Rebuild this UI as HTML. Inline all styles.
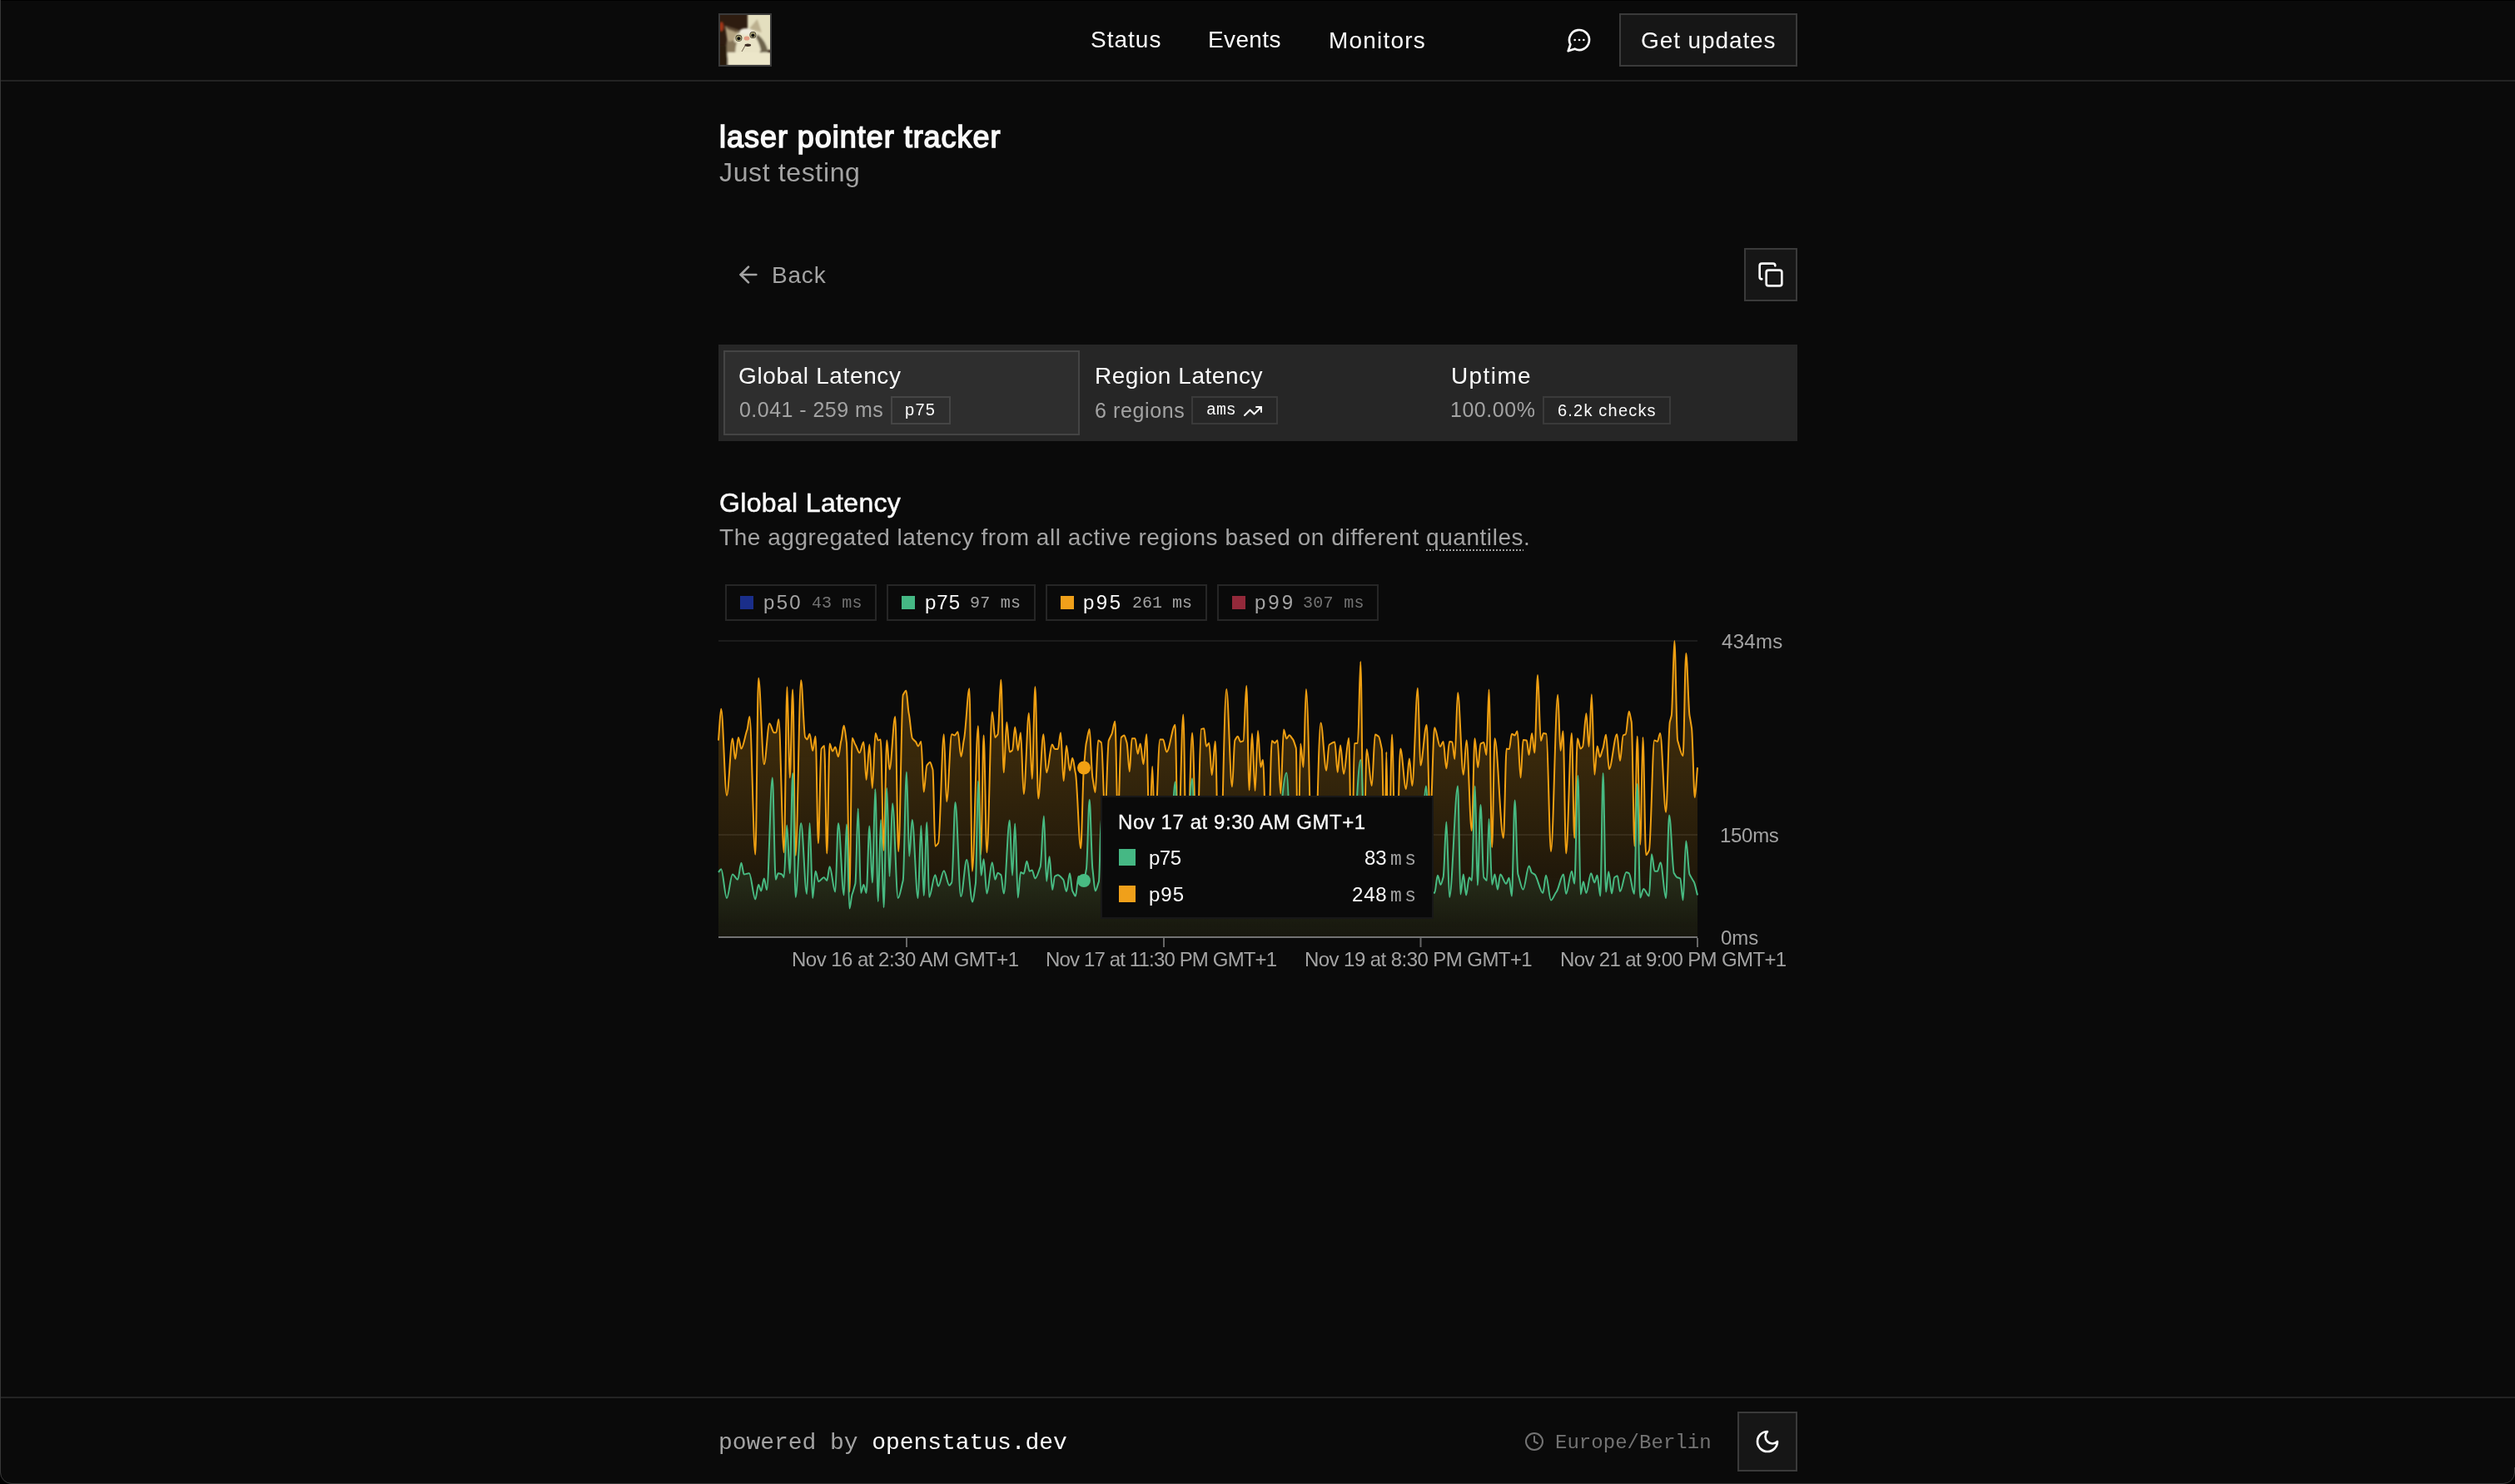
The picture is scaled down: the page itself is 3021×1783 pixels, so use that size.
<!DOCTYPE html>
<html><head><meta charset="utf-8"><title>laser pointer tracker</title>
<style>
html,body{margin:0;padding:0;}
body{width:3021px;height:1783px;background:#0a0a0a;position:relative;overflow:hidden;font-family:'Liberation Sans', sans-serif;}
.t{position:absolute;white-space:nowrap;line-height:1;will-change:transform;}
.r{position:absolute;}
</style></head><body>
<div class="r" style="left:0px;top:96px;width:3021px;height:2px;background:#232323;"></div>
<div class="r" style="left:863px;top:16px;width:64px;height:64px;background:#2a2a2a;border:2px solid #3a3a3a;box-sizing:border-box;overflow:hidden;"></div>
<svg class="r" style="left:865px;top:18px" width="60" height="60" viewBox="0 0 60 60">
<defs><filter id="bl" x="-20%" y="-20%" width="140%" height="140%"><feGaussianBlur stdDeviation="1.1"/></filter>
<filter id="bl2" x="-20%" y="-20%" width="140%" height="140%"><feGaussianBlur stdDeviation="0.5"/></filter></defs>
<rect width="60" height="60" fill="#2e1c10"/>
<g filter="url(#bl)">
<rect x="33" y="-2" width="30" height="44" fill="#e4dfbf"/>
<ellipse cx="1.5" cy="14" rx="3" ry="6" fill="#9e3418"/>
<path d="M6 13 L22 18 L21 30 L9 33 Z" fill="#b3a381"/>
<path d="M6 13 L22 18 L20 21 L9 17 Z" fill="#5e4c34"/>
<path d="M44.6 5 L35 16.5 L50 21 Z" fill="#bcb08f"/>
<ellipse cx="33" cy="36" rx="17" ry="19" fill="#e9e3c6"/>
<ellipse cx="31" cy="20" rx="8" ry="4" fill="#efeadb"/>
<path d="M45 23 Q56 32 58 46 L50 47 Q48 35 43 27 Z" fill="#6d634c"/>
<path d="M8 31 Q6 45 10 56 L19 56 Q17 44 20 33 Z" fill="#87775a"/>
<rect x="9" y="45" width="52" height="16" fill="#ece6c9"/>
<rect x="-2" y="37" width="10" height="25" fill="#2a1a10"/>
</g>
<g filter="url(#bl2)">
<circle cx="22.4" cy="27.8" r="4" fill="#3a3428"/>
<circle cx="22.4" cy="27.9" r="3.2" fill="#a9a274"/>
<circle cx="22.4" cy="28.3" r="2" fill="#0c0c08"/>
<circle cx="39.4" cy="23.9" r="4" fill="#3a3428"/>
<circle cx="39.4" cy="24" r="3.2" fill="#a9a274"/>
<circle cx="39.4" cy="24.4" r="2" fill="#0c0c08"/>
<ellipse cx="32" cy="28" rx="3.4" ry="2.6" fill="#e39c84"/>
<ellipse cx="33.3" cy="36.2" rx="3.8" ry="1.7" fill="#3a2a20"/>
<path d="M30 37 L26 44" stroke="#6a5a48" stroke-width="1"/>
</g>
</svg>
<div class="t" id="t1" style="left:1310.0px;top:33.50px;font-size:28px;color:#fafafa;font-family:'Liberation Sans', sans-serif;letter-spacing:1.0px;">Status</div>
<div class="t" id="t2" style="left:1451.4px;top:33.50px;font-size:28px;color:#fafafa;font-family:'Liberation Sans', sans-serif;letter-spacing:0.36px;">Events</div>
<div class="t" id="t3" style="left:1595.6px;top:34.50px;font-size:28px;color:#fafafa;font-family:'Liberation Sans', sans-serif;letter-spacing:1.2px;">Monitors</div>
<svg class="r" style="left:1881px;top:32px" width="32" height="32" viewBox="0 0 24 24" fill="none" stroke="#fafafa" stroke-width="2" stroke-linecap="round" stroke-linejoin="round"><path d="M7.9 20A9 9 0 1 0 4 16.1L2 22Z"/><path d="M8 12h.01"/><path d="M12 12h.01"/><path d="M16 12h.01"/></svg>
<div class="r" style="left:1945px;top:16px;width:214px;height:64px;background:#161616;border:2px solid #3a3a3a;box-sizing:border-box;"></div>
<div class="t" id="t4" style="left:1971px;top:35.30px;font-size:28px;color:#fafafa;font-family:'Liberation Sans', sans-serif;letter-spacing:0.9px;">Get updates</div>
<div class="t" id="t5" style="left:864px;top:146.53px;font-size:36px;color:#fafafa;font-family:'Liberation Sans', sans-serif;letter-spacing:0.97px;-webkit-text-stroke:1.5px #fafafa;">laser pointer tracker</div>
<div class="t" id="t6" style="left:864px;top:190.91px;font-size:32px;color:#a3a3a3;font-family:'Liberation Sans', sans-serif;letter-spacing:0.636px;">Just testing</div>
<svg class="r" style="left:883px;top:314px" width="32" height="32" viewBox="0 0 24 24" fill="none" stroke="#a3a3a3" stroke-width="2" stroke-linecap="round" stroke-linejoin="round"><path d="m12 19-7-7 7-7"/><path d="M19 12H5"/></svg>
<div class="t" id="t7" style="left:926.6px;top:316.90px;font-size:28px;color:#a3a3a3;font-family:'Liberation Sans', sans-serif;letter-spacing:0.8px;">Back</div>
<div class="r" style="left:2095px;top:298px;width:64px;height:64px;background:#161616;border:2px solid #3a3a3a;box-sizing:border-box;"></div>
<svg class="r" style="left:2111px;top:314px" width="32" height="32" viewBox="0 0 24 24" fill="none" stroke="#fafafa" stroke-width="2" stroke-linecap="round" stroke-linejoin="round"><rect width="14" height="14" x="8" y="8" rx="2" ry="2"/><path d="M4 16c-1.1 0-2-.9-2-2V4c0-1.1.9-2 2-2h10c1.1 0 2 .9 2 2"/></svg>
<div class="r" style="left:863px;top:414px;width:1296px;height:116px;background:#262626;"></div>
<div class="r" style="left:869px;top:421px;width:428px;height:102px;background:#2e2e2e;border:2px solid #444444;box-sizing:border-box;"></div>
<div class="t" id="t8" style="left:887px;top:438.20px;font-size:28px;color:#fafafa;font-family:'Liberation Sans', sans-serif;letter-spacing:0.631px;">Global Latency</div>
<div class="t" id="t9" style="left:887.8px;top:480.14px;font-size:25px;color:#a3a3a3;font-family:'Liberation Sans', sans-serif;letter-spacing:0.461px;">0.041 - 259 ms</div>
<div class="r" style="left:1070px;top:476px;width:72px;height:34px;background:transparent;border:2px solid #454545;box-sizing:border-box;"></div>
<div class="t" id="t10" style="left:1087px;top:482.27px;font-size:20px;color:#fafafa;font-family:'Liberation Sans', sans-serif;letter-spacing:1.3px;">p75</div>
<div class="t" id="t11" style="left:1315.0px;top:438.20px;font-size:28px;color:#fafafa;font-family:'Liberation Sans', sans-serif;letter-spacing:0.539px;">Region Latency</div>
<div class="t" id="t12" style="left:1315px;top:480.84px;font-size:25px;color:#a3a3a3;font-family:'Liberation Sans', sans-serif;letter-spacing:0.625px;">6 regions</div>
<div class="r" style="left:1431px;top:476px;width:104px;height:34px;background:transparent;border:2px solid #3a3a3a;box-sizing:border-box;"></div>
<div class="t" id="t13" style="left:1449.2px;top:482.67px;font-size:20px;color:#fafafa;font-family:'Liberation Mono', monospace;letter-spacing:-0.1px;">ams</div>
<svg class="r" style="left:1493px;top:482px" width="24" height="24" viewBox="0 0 24 24" fill="none" stroke="#fafafa" stroke-width="2" stroke-linecap="round" stroke-linejoin="round"><polyline points="22 7 13.5 15.5 8.5 10.5 2 17"/><polyline points="16 7 22 7 22 13"/></svg>
<div class="t" id="t14" style="left:1743.0px;top:437.80px;font-size:28px;color:#fafafa;font-family:'Liberation Sans', sans-serif;letter-spacing:1.4px;">Uptime</div>
<div class="t" id="t15" style="left:1742px;top:480.34px;font-size:25px;color:#a3a3a3;font-family:'Liberation Sans', sans-serif;letter-spacing:0.533px;">100.00%</div>
<div class="r" style="left:1853px;top:476px;width:154px;height:34px;background:transparent;border:2px solid #3a3a3a;box-sizing:border-box;"></div>
<div class="t" id="t16" style="left:1871.0px;top:483.07px;font-size:20px;color:#fafafa;font-family:'Liberation Sans', sans-serif;letter-spacing:1.2px;">6.2k checks</div>
<div class="t" id="t17" style="left:863.6px;top:587.81px;font-size:32px;color:#fafafa;font-family:'Liberation Sans', sans-serif;letter-spacing:0.338px;-webkit-text-stroke:0.5px #fafafa;">Global Latency</div>
<div class="t" id="t18" style="left:864px;top:631.70px;font-size:28px;color:#a3a3a3;font-family:'Liberation Sans', sans-serif;letter-spacing:0.539px;">The aggregated latency from all active regions based on different <span style="text-decoration:underline dotted;text-decoration-thickness:2px;text-underline-offset:5px;">quantiles</span>.</div>
<div class="r" style="left:871px;top:702px;width:182px;height:44px;background:transparent;border:2px solid #262626;box-sizing:border-box;"></div>
<div class="r" style="left:889px;top:716px;width:16px;height:16px;background:#1a2e8a;"></div>
<div class="t" id="t19" style="left:917px;top:711.88px;font-size:24px;color:#a3a3a3;font-family:'Liberation Sans', sans-serif;letter-spacing:2.3px;">p50</div>
<div class="t" id="t20" style="left:974.6px;top:714.57px;font-size:20px;color:#737373;font-family:'Liberation Mono', monospace;letter-spacing:0.1px;">43 ms</div>
<div class="r" style="left:1065px;top:702px;width:179px;height:44px;background:transparent;border:2px solid #262626;box-sizing:border-box;"></div>
<div class="r" style="left:1083px;top:716px;width:16px;height:16px;background:#45b884;"></div>
<div class="t" id="t21" style="left:1110.6px;top:711.88px;font-size:24px;color:#fafafa;font-family:'Liberation Sans', sans-serif;letter-spacing:1.0px;">p75</div>
<div class="t" id="t22" style="left:1165px;top:714.57px;font-size:20px;color:#a3a3a3;font-family:'Liberation Mono', monospace;letter-spacing:0.25px;">97 ms</div>
<div class="r" style="left:1256px;top:702px;width:194px;height:44px;background:transparent;border:2px solid #262626;box-sizing:border-box;"></div>
<div class="r" style="left:1274px;top:716px;width:16px;height:16px;background:#f0a01a;"></div>
<div class="t" id="t23" style="left:1301px;top:711.88px;font-size:24px;color:#fafafa;font-family:'Liberation Sans', sans-serif;letter-spacing:2.5px;">p95</div>
<div class="t" id="t24" style="left:1360px;top:714.57px;font-size:20px;color:#a3a3a3;font-family:'Liberation Mono', monospace;">261 ms</div>
<div class="r" style="left:1462px;top:702px;width:194px;height:44px;background:transparent;border:2px solid #262626;box-sizing:border-box;"></div>
<div class="r" style="left:1480px;top:716px;width:16px;height:16px;background:#93293a;"></div>
<div class="t" id="t25" style="left:1506.8px;top:711.88px;font-size:24px;color:#a3a3a3;font-family:'Liberation Sans', sans-serif;letter-spacing:3.0px;">p99</div>
<div class="t" id="t26" style="left:1565px;top:714.57px;font-size:20px;color:#737373;font-family:'Liberation Mono', monospace;letter-spacing:0.28px;">307 ms</div>
<svg class="r" style="left:0;top:0" width="3021" height="1200" viewBox="0 0 3021 1200">
<defs>
<linearGradient id="go" gradientUnits="userSpaceOnUse" x1="0" y1="770" x2="0" y2="1126"><stop offset="0" stop-color="#f0a012" stop-opacity="0.30"/><stop offset="1" stop-color="#f0a012" stop-opacity="0.05"/></linearGradient>
<linearGradient id="gg" gradientUnits="userSpaceOnUse" x1="0" y1="913" x2="0" y2="1126"><stop offset="0" stop-color="#48ba82" stop-opacity="0.28"/><stop offset="1" stop-color="#48ba82" stop-opacity="0.03"/></linearGradient>
</defs>
<rect x="863" y="769" width="1176" height="2" fill="#1c1c1c"/>
<rect x="863" y="1002" width="1176" height="2" fill="#1c1c1c"/>
<path d="M863.0,889.6C864.1,877.0 865.2,851.7 866.2,851.7C868.5,851.7 870.7,955.7 873.0,955.7C875.3,955.7 877.6,887.2 879.9,887.2C881.0,887.2 882.1,912.1 883.2,912.1C884.4,912.1 885.7,885.9 886.9,885.9C888.1,885.9 889.2,899.6 890.4,899.6C892.7,899.6 895.1,882.7 897.4,877.2C898.4,874.8 899.4,861.0 900.4,861.0C902.7,861.0 905.0,1026.8 907.3,1026.8C908.6,1026.8 909.8,814.8 911.1,814.8C913.3,814.8 915.6,918.3 917.8,918.3C920.0,918.3 922.1,869.2 924.3,869.2C926.1,869.2 927.9,880.2 929.8,880.2C930.6,880.2 931.4,880.2 932.3,880.2C933.3,880.2 934.3,864.2 935.3,864.2C937.4,864.2 939.6,1024.3 941.7,1024.3C943.0,1024.3 944.2,825.3 945.5,825.3C946.6,825.3 947.6,934.5 948.7,934.5C949.9,934.5 951.0,828.6 952.2,828.6C953.4,828.6 954.5,1028.0 955.7,1028.0C957.8,1028.0 960.0,817.3 962.2,817.3C963.8,817.3 965.5,884.2 967.2,885.9C968.0,886.7 968.8,888.4 969.6,888.4C970.6,888.4 971.6,881.7 972.6,881.7C973.8,881.7 975.0,902.1 976.1,902.1C977.3,902.1 978.4,884.7 979.6,884.7C980.7,884.7 981.8,1013.1 982.9,1013.1C984.1,1013.1 985.3,901.0 986.6,899.6C987.8,898.4 988.9,895.9 990.1,895.9C991.2,895.9 992.2,1025.5 993.3,1025.5C994.4,1025.5 995.5,893.4 996.6,893.4C997.7,893.4 998.9,902.6 1000.0,902.6C1001.1,902.6 1002.2,897.6 1003.3,897.6C1004.5,897.6 1005.7,909.1 1007.0,909.1C1008.1,909.1 1009.3,892.9 1010.5,889.6C1011.5,886.6 1012.6,871.7 1013.7,871.7C1014.8,871.7 1015.9,885.3 1016.9,892.1C1018.1,899.5 1019.3,1071.6 1020.4,1071.6C1021.5,1071.6 1022.6,886.7 1023.7,886.7C1024.9,886.7 1026.2,893.3 1027.4,894.6C1029.1,896.4 1030.7,904.6 1032.4,904.6C1034.1,904.6 1035.7,891.6 1037.4,891.6C1038.5,891.6 1039.5,937.0 1040.6,937.0C1041.9,937.0 1043.1,894.6 1044.4,894.6C1045.5,894.6 1046.7,947.0 1047.8,947.0C1049.1,947.0 1050.3,880.9 1051.6,880.9C1052.7,880.9 1053.7,889.6 1054.8,889.6C1055.8,889.6 1056.8,888.4 1057.8,888.4C1059.1,888.4 1060.3,1021.8 1061.5,1021.8C1062.8,1021.8 1064.0,889.6 1065.3,889.6C1066.4,889.6 1067.4,924.5 1068.5,924.5C1070.8,924.5 1073.0,861.0 1075.3,861.0C1076.6,861.0 1077.9,1023.0 1079.2,1023.0C1081.1,1023.0 1082.9,837.2 1084.7,834.8C1086.0,833.1 1087.2,829.8 1088.5,829.8C1089.5,829.8 1090.6,853.0 1091.7,857.2C1093.1,862.8 1094.5,885.7 1095.9,887.2C1097.2,888.4 1098.4,890.0 1099.7,890.9C1100.8,891.7 1101.8,896.6 1102.9,896.6C1104.1,896.6 1105.2,890.9 1106.4,890.9C1107.5,890.9 1108.6,951.5 1109.6,951.5C1110.9,951.5 1112.1,920.8 1113.4,919.6C1114.6,918.3 1115.9,915.8 1117.1,915.8C1118.2,915.8 1119.3,921.6 1120.4,924.5C1121.4,927.2 1122.4,1016.8 1123.3,1016.8C1124.6,1016.8 1125.8,1014.3 1127.1,1013.1C1129.3,1010.8 1131.6,882.2 1133.8,882.2C1134.9,882.2 1136.0,963.2 1137.1,963.2C1139.1,963.2 1141.2,882.2 1143.2,882.2C1144.5,882.2 1145.7,883.4 1147.0,883.4C1148.1,883.4 1149.3,879.2 1150.5,879.2C1151.8,879.2 1153.1,909.1 1154.5,909.1C1155.6,909.1 1156.8,892.6 1157.9,888.4C1160.1,880.7 1162.3,827.3 1164.4,827.3C1165.6,827.3 1166.7,1046.7 1167.9,1046.7C1170.2,1046.7 1172.6,872.2 1174.9,872.2C1176.0,872.2 1177.0,1026.8 1178.1,1026.8C1179.3,1026.8 1180.5,883.4 1181.6,883.4C1182.9,883.4 1184.1,1024.3 1185.4,1024.3C1187.5,1024.3 1189.7,855.5 1191.8,855.5C1193.0,855.5 1194.2,885.9 1195.3,885.9C1196.4,885.9 1197.5,883.4 1198.6,882.2C1199.8,880.7 1201.1,816.8 1202.3,816.8C1203.5,816.8 1204.6,928.3 1205.8,928.3C1206.9,928.3 1208.1,867.7 1209.3,867.7C1210.4,867.7 1211.6,903.4 1212.8,903.4C1213.8,903.4 1214.9,902.2 1216.0,901.6C1217.1,901.0 1218.2,873.4 1219.2,873.4C1220.4,873.4 1221.6,901.6 1222.7,901.6C1223.8,901.6 1224.9,880.2 1226.0,880.2C1227.2,880.2 1228.5,954.0 1229.7,954.0C1231.8,954.0 1233.9,856.7 1235.9,856.7C1237.2,856.7 1238.4,935.8 1239.7,935.8C1240.9,935.8 1242.2,825.3 1243.4,825.3C1244.7,825.3 1245.9,959.5 1247.2,959.5C1249.2,959.5 1251.3,882.2 1253.4,882.2C1254.6,882.2 1255.9,928.3 1257.1,928.3C1259.4,928.3 1261.6,894.6 1263.8,894.6C1264.9,894.6 1266.0,900.1 1267.1,900.1C1268.3,900.1 1269.6,900.1 1270.8,900.1C1271.9,900.1 1273.0,880.2 1274.1,880.2C1275.2,880.2 1276.4,938.3 1277.6,938.3C1278.7,938.3 1279.9,895.9 1281.0,895.9C1282.4,895.9 1283.7,925.8 1285.0,925.8C1286.1,925.8 1287.1,910.8 1288.2,910.8C1289.5,910.8 1290.7,924.2 1292.0,929.5C1294.0,938.4 1296.1,1019.3 1298.2,1019.3C1299.4,1019.3 1300.7,932.7 1301.9,922.1C1302.9,913.5 1303.9,895.9 1304.9,892.1C1306.2,887.5 1307.4,875.9 1308.7,875.9C1309.9,875.9 1311.1,928.2 1312.4,934.5C1313.5,940.0 1314.6,952.0 1315.6,952.0C1316.8,952.0 1318.0,889.6 1319.1,889.6C1320.4,889.6 1321.6,891.3 1322.9,892.1C1324.4,893.1 1325.9,979.4 1327.3,979.4C1328.8,979.4 1330.3,892.8 1331.8,889.6C1333.0,887.2 1334.2,883.9 1335.3,882.2C1336.6,880.2 1338.0,866.7 1339.3,866.7C1340.5,866.7 1341.6,984.4 1342.8,984.4C1344.1,984.4 1345.5,886.9 1346.8,885.9C1347.9,885.1 1349.1,883.4 1350.3,883.4C1351.4,883.4 1352.4,889.2 1353.5,892.1C1354.6,895.0 1355.7,927.0 1356.8,927.0C1357.7,927.0 1358.7,887.2 1359.7,887.2C1361.0,887.2 1362.2,887.2 1363.5,887.2C1364.6,887.2 1365.6,905.8 1366.7,905.8C1367.7,905.8 1368.7,893.4 1369.7,893.4C1371.0,893.4 1372.2,918.3 1373.4,918.3C1374.7,918.3 1375.9,882.2 1377.2,882.2C1378.3,882.2 1379.5,1009.3 1380.7,1009.3C1381.8,1009.3 1383.0,920.8 1384.2,920.8C1385.2,920.8 1386.2,1004.3 1387.2,1004.3C1389.2,1004.3 1391.3,888.4 1393.4,888.4C1394.6,888.4 1395.9,888.4 1397.1,888.4C1398.5,888.4 1399.9,903.4 1401.4,903.4C1404.8,903.4 1408.2,870.9 1411.6,870.9C1412.7,870.9 1413.9,1021.8 1415.1,1021.8C1417.2,1021.8 1419.3,858.4 1421.3,858.4C1422.7,858.4 1424.0,1056.5 1425.4,1056.5C1427.6,1056.5 1429.9,880.6 1432.1,880.6C1433.9,880.6 1435.7,1029.5 1437.5,1029.5C1439.3,1029.5 1441.1,876.3 1442.9,875.9C1444.0,875.7 1445.2,875.2 1446.3,875.2C1447.2,875.2 1448.1,896.8 1449.0,896.8C1450.1,896.8 1451.2,892.7 1452.3,892.7C1453.5,892.7 1454.6,931.2 1455.7,931.2C1457.1,931.2 1458.4,890.7 1459.8,890.7C1461.3,890.7 1462.9,1083.5 1464.5,1083.5C1467.4,1083.5 1470.3,828.1 1473.2,828.1C1475.5,828.1 1477.7,945.3 1480.0,945.3C1481.1,945.3 1482.2,891.0 1483.4,889.4C1484.5,887.8 1485.6,884.7 1486.7,884.7C1487.8,884.7 1489.0,891.4 1490.1,891.4C1491.2,891.4 1492.3,890.5 1493.5,890.1C1494.7,889.6 1496.0,824.0 1497.2,824.0C1498.4,824.0 1499.5,949.4 1500.6,949.4C1501.7,949.4 1502.9,881.3 1504.0,881.3C1505.2,881.3 1506.4,950.0 1507.6,950.0C1508.7,950.0 1509.9,877.9 1511.0,877.9C1512.1,877.9 1513.2,921.7 1514.4,921.7C1515.3,921.7 1516.1,913.0 1517.0,913.0C1518.8,913.0 1520.6,1070.0 1522.4,1070.0C1524.2,1070.0 1526.0,890.1 1527.8,890.1C1529.0,890.1 1530.1,892.7 1531.2,892.7C1532.3,892.7 1533.4,889.4 1534.6,889.4C1535.8,889.4 1537.1,953.4 1538.3,953.4C1539.6,953.4 1540.8,876.6 1542.0,876.6C1543.1,876.6 1544.2,887.4 1545.4,887.4C1546.5,887.4 1547.6,883.3 1548.7,883.3C1550.1,883.3 1551.4,886.7 1552.8,888.0C1554.1,889.3 1555.5,895.2 1556.8,898.8C1557.6,900.9 1558.3,1043.0 1559.1,1043.0C1560.1,1043.0 1561.2,893.4 1562.2,893.4C1563.3,893.4 1564.4,921.7 1565.6,921.7C1566.7,921.7 1567.8,828.1 1568.9,828.1C1571.9,828.1 1574.8,1096.9 1577.7,1096.9C1580.6,1096.9 1583.5,868.5 1586.5,868.5C1588.7,868.5 1591.0,925.8 1593.2,925.8C1594.3,925.8 1595.5,895.3 1596.6,894.8C1598.8,893.6 1601.1,891.4 1603.3,891.4C1604.4,891.4 1605.6,927.8 1606.7,927.8C1607.8,927.8 1608.9,895.4 1610.1,895.4C1611.4,895.4 1612.7,929.8 1614.1,929.8C1616.1,929.8 1618.1,886.7 1620.2,886.7C1621.4,886.7 1622.6,1056.5 1623.8,1056.5C1624.8,1056.5 1625.9,893.6 1626.9,893.4C1628.2,893.2 1629.6,893.0 1630.9,892.7C1632.1,892.6 1633.2,795.0 1634.3,795.0C1635.6,795.0 1636.8,1029.5 1638.1,1029.5C1639.3,1029.5 1640.5,900.2 1641.7,900.2C1643.7,900.2 1645.8,944.0 1647.8,944.0C1649.1,944.0 1650.5,882.6 1651.8,882.6C1653.2,882.6 1654.5,884.0 1655.9,884.7C1657.2,885.3 1658.6,895.0 1659.9,900.2C1661.0,904.5 1662.2,1043.0 1663.3,1043.0C1664.0,1043.0 1664.6,903.5 1665.3,903.5C1666.2,903.5 1667.1,1056.5 1668.0,1056.5C1669.4,1056.5 1670.7,882.6 1672.1,882.6C1673.6,882.6 1675.2,1070.0 1676.8,1070.0C1678.6,1070.0 1680.4,899.5 1682.2,899.5C1684.4,899.5 1686.7,948.0 1688.9,948.0C1690.3,948.0 1691.6,911.6 1692.9,911.6C1694.1,911.6 1695.2,944.0 1696.3,944.0C1698.5,944.0 1700.8,826.8 1703.0,826.8C1704.1,826.8 1705.2,919.6 1706.2,919.6C1708.7,919.6 1711.2,870.9 1713.7,870.9C1715.1,870.9 1716.5,984.4 1717.9,984.4C1719.7,984.4 1721.4,874.2 1723.2,874.2C1725.4,874.2 1727.7,897.1 1729.9,897.1C1731.2,897.1 1732.4,890.9 1733.6,890.9C1734.9,890.9 1736.1,923.3 1737.4,923.3C1738.6,923.3 1739.9,890.9 1741.1,890.9C1742.2,890.9 1743.3,891.4 1744.4,891.6C1745.4,891.9 1746.4,912.1 1747.4,912.1C1748.6,912.1 1749.9,832.3 1751.1,832.3C1753.3,832.3 1755.6,930.8 1757.8,930.8C1759.1,930.8 1760.3,889.6 1761.6,889.6C1763.6,889.6 1765.7,998.1 1767.8,998.1C1769.0,998.1 1770.3,887.2 1771.5,887.2C1772.8,887.2 1774.0,922.1 1775.3,922.1C1776.4,922.1 1777.4,893.7 1778.5,893.4C1779.8,893.0 1781.0,892.1 1782.3,892.1C1783.3,892.1 1784.4,907.1 1785.5,907.1C1786.5,907.1 1787.5,828.6 1788.5,828.6C1789.7,828.6 1791.0,1018.0 1792.2,1018.0C1793.3,1018.0 1794.4,887.2 1795.5,887.2C1799.0,887.2 1802.4,1006.8 1805.9,1006.8C1807.2,1006.8 1808.4,899.6 1809.7,899.6C1810.8,899.6 1811.8,900.1 1812.9,900.1C1813.9,900.1 1814.9,881.7 1815.9,881.7C1817.1,881.7 1818.4,883.4 1819.6,883.4C1820.6,883.4 1821.6,878.4 1822.6,878.4C1824.0,878.4 1825.3,934.5 1826.6,934.5C1827.6,934.5 1828.6,889.1 1829.6,889.1C1831.0,889.1 1832.4,889.5 1833.8,889.6C1834.8,889.8 1835.7,907.1 1836.6,907.1C1837.8,907.1 1838.9,880.9 1840.1,880.9C1841.2,880.9 1842.2,904.6 1843.3,904.6C1844.6,904.6 1845.8,811.1 1847.1,811.1C1848.3,811.1 1849.6,890.1 1850.8,890.1C1851.9,890.1 1853.0,880.9 1854.0,880.9C1855.2,880.9 1856.4,881.4 1857.5,881.7C1859.3,882.1 1861.2,1023.0 1863.0,1023.0C1865.7,1023.0 1868.5,834.8 1871.2,834.8C1872.3,834.8 1873.4,902.1 1874.5,902.1C1875.5,902.1 1876.5,878.4 1877.5,878.4C1878.7,878.4 1879.9,1025.5 1881.2,1025.5C1883.4,1025.5 1885.7,880.9 1887.9,880.9C1889.0,880.9 1890.1,1006.8 1891.2,1006.8C1892.4,1006.8 1893.7,887.2 1894.9,887.2C1896.2,887.2 1897.4,899.6 1898.6,899.6C1899.5,899.6 1900.3,898.0 1901.1,897.1C1902.5,895.7 1904.0,857.2 1905.4,857.2C1906.5,857.2 1907.5,897.1 1908.6,897.1C1909.7,897.1 1910.8,834.3 1911.9,834.3C1913.0,834.3 1914.2,930.8 1915.3,930.8C1916.4,930.8 1917.5,896.6 1918.6,896.6C1919.7,896.6 1920.7,909.6 1921.8,909.6C1923.0,909.6 1924.2,901.7 1925.3,899.6C1926.6,897.3 1927.8,882.7 1929.1,882.7C1930.3,882.7 1931.6,924.0 1932.8,924.0C1936.0,924.0 1939.1,882.2 1942.3,882.2C1943.5,882.2 1944.8,914.1 1946.0,914.1C1947.3,914.1 1948.5,883.9 1949.8,883.4C1950.8,883.0 1951.7,882.6 1952.7,882.2C1954.1,881.6 1955.4,854.7 1956.7,854.7C1957.7,854.7 1958.7,863.0 1959.7,867.2C1961.0,872.4 1962.2,1016.8 1963.5,1016.8C1964.5,1016.8 1965.6,884.7 1966.7,884.7C1967.9,884.7 1969.0,1014.8 1970.2,1014.8C1971.3,1014.8 1972.4,885.9 1973.4,885.9C1974.7,885.9 1975.9,1027.3 1977.2,1027.3C1978.4,1027.3 1979.7,1023.6 1980.9,1021.8C1983.0,1018.7 1985.1,889.6 1987.2,889.6C1988.4,889.6 1989.6,890.9 1990.9,890.9C1992.0,890.9 1993.1,880.9 1994.1,880.9C1996.5,880.9 1998.8,975.7 2001.1,975.7C2002.7,975.7 2004.3,873.1 2005.8,867.2C2006.5,864.7 2007.2,862.2 2007.8,859.7C2009.0,855.4 2010.2,770.0 2011.3,770.0C2012.6,770.0 2013.8,886.0 2015.1,889.6C2017.2,895.9 2019.4,908.3 2021.6,908.3C2022.8,908.3 2024.0,784.9 2025.3,784.9C2026.7,784.9 2028.1,852.4 2029.5,859.7C2030.4,864.0 2031.2,869.7 2032.0,874.7C2033.3,882.2 2034.5,958.2 2035.8,958.2C2036.8,958.2 2037.9,934.1 2039.0,922.1L2039,1126L863,1126Z" fill="url(#go)"/>
<path d="M863.0,1048.0C864.1,1046.7 865.2,1044.2 866.2,1044.2C868.5,1044.2 870.7,1079.1 873.0,1079.1C875.3,1079.1 877.6,1050.5 879.9,1050.5C882.0,1050.5 884.1,1056.7 886.2,1056.7C887.6,1056.7 889.0,1036.7 890.4,1036.7C891.5,1036.7 892.6,1050.5 893.6,1050.5C895.7,1050.5 897.8,1049.2 899.9,1049.2C902.4,1049.2 904.9,1080.4 907.3,1080.4C908.6,1080.4 909.8,1062.9 911.1,1062.9C912.2,1062.9 913.2,1070.4 914.3,1070.4C915.5,1070.4 916.6,1055.4 917.8,1055.4C918.9,1055.4 920.0,1069.1 921.1,1069.1C923.3,1069.1 925.5,934.5 927.8,934.5C929.1,934.5 930.4,1056.7 931.8,1056.7C932.8,1056.7 933.8,1049.2 934.8,1049.2C936.3,1049.2 937.7,1050.0 939.2,1050.5C940.1,1050.7 940.9,1054.2 941.7,1054.2C942.9,1054.2 944.1,991.4 945.2,991.4C946.4,991.4 947.5,1049.2 948.7,1049.2C949.9,1049.2 951.0,929.0 952.2,929.0C953.4,929.0 954.5,1077.9 955.7,1077.9C957.8,1077.9 960.0,988.9 962.2,988.9C964.5,988.9 966.8,1074.1 969.1,1074.1C970.3,1074.1 971.5,988.9 972.6,988.9C973.8,988.9 975.0,1079.1 976.1,1079.1C977.3,1079.1 978.4,1046.7 979.6,1046.7C980.9,1046.7 982.1,1059.2 983.3,1059.2C985.4,1059.2 987.5,1054.2 989.6,1054.2C990.8,1054.2 992.1,1057.9 993.3,1057.9C994.4,1057.9 995.5,1041.2 996.6,1041.2C998.8,1041.2 1001.0,1071.6 1003.3,1071.6C1004.5,1071.6 1005.7,988.9 1007.0,988.9C1009.2,988.9 1011.5,1075.4 1013.7,1075.4C1014.8,1075.4 1015.9,990.6 1016.9,990.6C1018.1,990.6 1019.3,1091.6 1020.4,1091.6C1021.5,1091.6 1022.6,1076.5 1023.7,1074.1C1024.9,1071.4 1026.2,1065.8 1027.4,1061.7C1028.5,1058.1 1029.6,971.4 1030.7,971.4C1031.8,971.4 1033.0,1072.9 1034.1,1072.9C1035.2,1072.9 1036.3,1062.9 1037.4,1062.9C1038.5,1062.9 1039.5,1072.9 1040.6,1072.9C1041.9,1072.9 1043.1,992.4 1044.4,992.4C1045.5,992.4 1046.7,1060.4 1047.8,1060.4C1049.0,1060.4 1050.2,948.2 1051.3,948.2C1052.5,948.2 1053.7,1082.9 1054.8,1082.9C1055.9,1082.9 1057.0,985.1 1058.1,985.1C1059.2,985.1 1060.4,1090.3 1061.5,1090.3C1062.8,1090.3 1064.0,947.0 1065.3,947.0C1066.4,947.0 1067.4,1052.9 1068.5,1052.9C1069.7,1052.9 1070.9,965.2 1072.0,965.2C1074.3,965.2 1076.5,1079.1 1078.7,1079.1C1080.7,1079.1 1082.7,1065.0 1084.7,1057.9C1086.1,1052.9 1087.5,927.5 1089.0,927.5C1090.0,927.5 1091.1,1028.8 1092.2,1028.8C1093.4,1028.8 1094.5,985.1 1095.7,985.1C1098.0,985.1 1100.3,1079.1 1102.7,1079.1C1103.9,1079.1 1105.2,991.9 1106.4,991.9C1107.5,991.9 1108.6,1076.1 1109.6,1076.1C1110.9,1076.1 1112.1,988.1 1113.4,988.1C1114.3,988.1 1115.2,1077.9 1116.1,1077.9C1118.5,1077.9 1120.9,1051.2 1123.3,1051.2C1124.6,1051.2 1125.8,1064.7 1127.1,1064.7C1129.3,1064.7 1131.6,1046.2 1133.8,1046.2C1136.0,1046.2 1138.1,1063.7 1140.3,1063.7C1141.3,1063.7 1142.3,1061.5 1143.2,1060.4C1144.7,1058.9 1146.1,963.9 1147.5,963.9C1149.7,963.9 1152.0,1077.1 1154.2,1077.1C1156.5,1077.1 1158.9,1033.0 1161.2,1033.0C1163.5,1033.0 1165.8,1083.6 1168.2,1083.6C1169.4,1083.6 1170.7,1069.0 1171.9,1061.7C1172.9,1055.8 1173.9,938.3 1174.9,938.3C1176.1,938.3 1177.4,1051.7 1178.6,1051.7C1179.6,1051.7 1180.6,1032.3 1181.6,1032.3C1182.9,1032.3 1184.1,1073.6 1185.4,1073.6C1187.5,1073.6 1189.7,1036.2 1191.8,1036.2C1193.0,1036.2 1194.2,1056.7 1195.3,1056.7C1196.4,1056.7 1197.5,1048.7 1198.6,1048.7C1199.8,1048.7 1201.1,1050.4 1202.3,1051.2C1203.5,1052.0 1204.6,1073.6 1205.8,1073.6C1208.1,1073.6 1210.4,985.6 1212.8,985.6C1213.8,985.6 1214.9,1051.7 1216.0,1051.7C1217.1,1051.7 1218.2,989.4 1219.2,989.4C1220.4,989.4 1221.6,1078.6 1222.7,1078.6C1223.8,1078.6 1224.9,1048.0 1226.0,1048.0C1227.2,1048.0 1228.5,1049.7 1229.7,1049.7C1231.0,1049.7 1232.2,1034.7 1233.4,1034.7C1234.5,1034.7 1235.6,1046.7 1236.7,1046.7C1237.7,1046.7 1238.7,1045.5 1239.7,1045.5C1240.9,1045.5 1242.2,1055.4 1243.4,1055.4C1245.5,1055.4 1247.6,1046.3 1249.6,1041.7C1251.1,1038.6 1252.5,980.6 1253.9,980.6C1255.0,980.6 1256.0,1058.7 1257.1,1058.7C1258.3,1058.7 1259.4,1029.3 1260.6,1029.3C1261.8,1029.3 1262.9,1069.1 1264.1,1069.1C1265.1,1069.1 1266.1,1053.4 1267.1,1052.9C1268.3,1052.4 1269.6,1051.2 1270.8,1051.2C1272.9,1051.2 1275.0,1054.9 1277.1,1056.7C1278.4,1057.9 1279.7,1071.1 1281.0,1071.1C1282.4,1071.1 1283.7,1049.2 1285.0,1049.2C1286.1,1049.2 1287.1,1068.6 1288.2,1070.4C1289.5,1072.5 1290.7,1076.6 1292.0,1076.6C1293.1,1076.6 1294.3,1052.9 1295.4,1052.9C1297.6,1052.9 1299.8,1057.9 1301.9,1057.9C1302.9,1057.9 1303.9,1048.8 1304.9,1044.2C1306.2,1038.5 1307.4,960.7 1308.7,960.7C1309.9,960.7 1311.1,1035.1 1312.4,1044.2C1313.5,1052.2 1314.6,1070.4 1315.6,1070.4C1317.0,1070.4 1318.5,1062.9 1319.9,1059.2C1320.9,1056.5 1321.9,981.9 1322.9,981.9C1324.4,981.9 1325.9,1071.6 1327.3,1071.6C1329.8,1071.6 1332.3,1059.2 1334.8,1059.2C1338.1,1059.2 1341.5,1066.7 1344.8,1066.7C1348.1,1066.7 1351.4,1056.7 1354.8,1056.7C1358.1,1056.7 1361.4,1069.1 1364.7,1069.1C1368.0,1069.1 1371.4,1061.7 1374.7,1061.7C1378.0,1061.7 1381.3,1071.6 1384.7,1071.6C1388.0,1071.6 1391.3,1067.7 1394.6,1066.7C1397.9,1065.6 1401.3,1061.7 1404.6,1059.2C1406.9,1057.4 1409.2,939.5 1411.6,939.5C1413.0,939.5 1414.4,1060.2 1415.8,1064.2C1418.1,1070.6 1420.4,1083.5 1422.7,1083.5C1425.8,1083.5 1429.0,935.2 1432.1,935.2C1433.9,935.2 1435.7,1096.9 1437.5,1096.9C1440.7,1096.9 1443.8,1070.0 1447.0,1070.0C1451.5,1070.0 1455.9,1090.2 1460.4,1090.2C1464.9,1090.2 1469.4,1076.7 1473.9,1076.7C1478.4,1076.7 1482.9,1090.2 1487.4,1090.2C1491.9,1090.2 1496.4,1070.0 1500.9,1070.0C1505.4,1070.0 1509.9,1096.9 1514.4,1096.9C1518.8,1096.9 1523.3,1086.1 1527.8,1080.8C1533.7,1073.7 1539.5,928.5 1545.4,928.5C1548.0,928.5 1550.7,1090.2 1553.4,1090.2C1558.4,1090.2 1563.3,1076.7 1568.3,1076.7C1572.8,1076.7 1577.3,1090.2 1581.7,1090.2C1586.2,1090.2 1590.7,1070.0 1595.2,1070.0C1599.7,1070.0 1604.2,1094.2 1608.7,1094.2C1613.2,1094.2 1617.7,1082.6 1622.2,1076.7C1626.2,1071.5 1630.3,913.0 1634.3,913.0C1637.0,913.0 1639.7,1090.2 1642.4,1090.2C1646.9,1090.2 1651.4,1076.7 1655.9,1076.7C1660.4,1076.7 1664.9,1090.2 1669.4,1090.2C1673.9,1090.2 1678.3,1070.0 1682.8,1070.0C1687.3,1070.0 1691.8,1094.2 1696.3,1094.2C1699.2,1094.2 1702.1,1075.8 1705.0,1066.7C1707.6,1058.2 1710.3,944.5 1713.0,944.5C1714.9,944.5 1716.8,1067.6 1718.7,1069.1C1720.2,1070.4 1721.7,1072.9 1723.2,1072.9C1724.4,1072.9 1725.7,1051.7 1726.9,1051.7C1728.1,1051.7 1729.2,1062.9 1730.4,1062.9C1731.5,1062.9 1732.6,1057.1 1733.6,1054.2C1734.9,1050.8 1736.1,987.4 1737.4,987.4C1738.6,987.4 1739.9,1077.9 1741.1,1077.9C1744.4,1077.9 1747.8,944.5 1751.1,944.5C1752.2,944.5 1753.3,1074.6 1754.3,1074.6C1755.5,1074.6 1756.7,1050.5 1757.8,1050.5C1758.9,1050.5 1760.0,1075.4 1761.1,1075.4C1762.3,1075.4 1763.6,1054.2 1764.8,1054.2C1765.8,1054.2 1766.8,1057.9 1767.8,1057.9C1769.1,1057.9 1770.5,944.5 1771.8,944.5C1772.8,944.5 1773.8,1063.7 1774.8,1063.7C1776.0,1063.7 1777.3,966.9 1778.5,966.9C1779.8,966.9 1781.0,1052.9 1782.3,1054.2C1783.5,1055.4 1784.7,1057.9 1786.0,1057.9C1786.8,1057.9 1787.7,983.9 1788.5,983.9C1789.7,983.9 1791.0,1062.9 1792.2,1062.9C1793.3,1062.9 1794.4,1050.5 1795.5,1050.5C1796.6,1050.5 1797.8,1068.7 1799.0,1068.7C1800.0,1068.7 1801.1,1050.5 1802.2,1050.5C1804.5,1050.5 1806.8,1061.7 1809.2,1061.7C1810.3,1061.7 1811.5,1054.7 1812.7,1054.7C1813.7,1054.7 1814.8,1076.6 1815.9,1076.6C1817.1,1076.6 1818.4,961.4 1819.6,961.4C1820.9,961.4 1822.1,1046.8 1823.4,1050.5C1825.5,1056.5 1827.5,1068.7 1829.6,1068.7C1831.9,1068.7 1834.3,1040.5 1836.6,1040.5C1837.8,1040.5 1838.9,1048.1 1840.1,1048.7C1841.2,1049.3 1842.2,1049.9 1843.3,1050.5C1846.6,1052.0 1850.0,1072.9 1853.3,1072.9C1854.5,1072.9 1855.8,1051.7 1857.0,1051.7C1859.0,1051.7 1861.0,1081.6 1863.0,1081.6C1865.2,1081.6 1867.3,1073.8 1869.5,1071.6C1872.3,1068.9 1875.1,1050.5 1878.0,1050.5C1879.0,1050.5 1880.1,1074.1 1881.2,1074.1C1883.4,1074.1 1885.7,1046.7 1887.9,1046.7C1889.0,1046.7 1890.1,1061.7 1891.2,1061.7C1892.6,1061.7 1894.0,932.0 1895.4,932.0C1896.5,932.0 1897.6,1074.6 1898.6,1074.6C1899.7,1074.6 1900.8,1059.2 1901.9,1059.2C1903.0,1059.2 1904.2,1072.9 1905.4,1072.9C1907.3,1072.9 1909.2,1049.2 1911.1,1049.2C1912.5,1049.2 1913.9,1060.4 1915.3,1060.4C1916.4,1060.4 1917.5,1051.7 1918.6,1051.7C1919.8,1051.7 1921.1,1076.6 1922.3,1076.6C1923.4,1076.6 1924.5,929.0 1925.6,929.0C1926.7,929.0 1927.9,1071.6 1929.1,1071.6C1930.1,1071.6 1931.2,1047.2 1932.3,1047.2C1933.5,1047.2 1934.8,1073.6 1936.0,1073.6C1937.1,1073.6 1938.2,1054.8 1939.3,1054.2C1940.4,1053.5 1941.6,1052.2 1942.8,1052.2C1943.9,1052.2 1944.9,1071.1 1946.0,1071.1C1948.5,1071.1 1951.0,1048.0 1953.5,1048.0C1954.6,1048.0 1955.7,1048.8 1956.7,1049.2C1958.8,1050.0 1960.9,1074.1 1963.0,1074.1C1964.2,1074.1 1965.5,942.0 1966.7,942.0C1967.9,942.0 1969.0,1078.6 1970.2,1078.6C1971.5,1078.6 1972.9,1067.9 1974.2,1067.9C1976.4,1067.9 1978.7,1076.6 1980.9,1076.6C1981.9,1076.6 1982.9,1026.3 1983.9,1026.3C1985.2,1026.3 1986.4,1046.7 1987.6,1046.7C1988.7,1046.7 1989.8,1046.7 1990.9,1046.7C1992.1,1046.7 1993.4,1036.2 1994.6,1036.2C1996.8,1036.2 1999.0,1079.1 2001.1,1079.1C2002.4,1079.1 2003.8,979.4 2005.1,979.4C2007.0,979.4 2008.9,1046.7 2010.8,1049.2C2012.1,1050.9 2013.3,1053.8 2014.6,1054.2C2015.8,1054.6 2017.1,1055.0 2018.3,1055.4C2019.4,1055.8 2020.5,1081.6 2021.6,1081.6C2022.8,1081.6 2024.0,1010.6 2025.3,1010.6C2026.7,1010.6 2028.1,1048.0 2029.5,1050.5C2031.2,1053.4 2032.9,1056.9 2034.5,1059.2C2036.0,1061.2 2037.5,1070.0 2039.0,1075.4L2039,1126L863,1126Z" fill="url(#gg)"/>
<path d="M863.0,889.6C864.1,877.0 865.2,851.7 866.2,851.7C868.5,851.7 870.7,955.7 873.0,955.7C875.3,955.7 877.6,887.2 879.9,887.2C881.0,887.2 882.1,912.1 883.2,912.1C884.4,912.1 885.7,885.9 886.9,885.9C888.1,885.9 889.2,899.6 890.4,899.6C892.7,899.6 895.1,882.7 897.4,877.2C898.4,874.8 899.4,861.0 900.4,861.0C902.7,861.0 905.0,1026.8 907.3,1026.8C908.6,1026.8 909.8,814.8 911.1,814.8C913.3,814.8 915.6,918.3 917.8,918.3C920.0,918.3 922.1,869.2 924.3,869.2C926.1,869.2 927.9,880.2 929.8,880.2C930.6,880.2 931.4,880.2 932.3,880.2C933.3,880.2 934.3,864.2 935.3,864.2C937.4,864.2 939.6,1024.3 941.7,1024.3C943.0,1024.3 944.2,825.3 945.5,825.3C946.6,825.3 947.6,934.5 948.7,934.5C949.9,934.5 951.0,828.6 952.2,828.6C953.4,828.6 954.5,1028.0 955.7,1028.0C957.8,1028.0 960.0,817.3 962.2,817.3C963.8,817.3 965.5,884.2 967.2,885.9C968.0,886.7 968.8,888.4 969.6,888.4C970.6,888.4 971.6,881.7 972.6,881.7C973.8,881.7 975.0,902.1 976.1,902.1C977.3,902.1 978.4,884.7 979.6,884.7C980.7,884.7 981.8,1013.1 982.9,1013.1C984.1,1013.1 985.3,901.0 986.6,899.6C987.8,898.4 988.9,895.9 990.1,895.9C991.2,895.9 992.2,1025.5 993.3,1025.5C994.4,1025.5 995.5,893.4 996.6,893.4C997.7,893.4 998.9,902.6 1000.0,902.6C1001.1,902.6 1002.2,897.6 1003.3,897.6C1004.5,897.6 1005.7,909.1 1007.0,909.1C1008.1,909.1 1009.3,892.9 1010.5,889.6C1011.5,886.6 1012.6,871.7 1013.7,871.7C1014.8,871.7 1015.9,885.3 1016.9,892.1C1018.1,899.5 1019.3,1071.6 1020.4,1071.6C1021.5,1071.6 1022.6,886.7 1023.7,886.7C1024.9,886.7 1026.2,893.3 1027.4,894.6C1029.1,896.4 1030.7,904.6 1032.4,904.6C1034.1,904.6 1035.7,891.6 1037.4,891.6C1038.5,891.6 1039.5,937.0 1040.6,937.0C1041.9,937.0 1043.1,894.6 1044.4,894.6C1045.5,894.6 1046.7,947.0 1047.8,947.0C1049.1,947.0 1050.3,880.9 1051.6,880.9C1052.7,880.9 1053.7,889.6 1054.8,889.6C1055.8,889.6 1056.8,888.4 1057.8,888.4C1059.1,888.4 1060.3,1021.8 1061.5,1021.8C1062.8,1021.8 1064.0,889.6 1065.3,889.6C1066.4,889.6 1067.4,924.5 1068.5,924.5C1070.8,924.5 1073.0,861.0 1075.3,861.0C1076.6,861.0 1077.9,1023.0 1079.2,1023.0C1081.1,1023.0 1082.9,837.2 1084.7,834.8C1086.0,833.1 1087.2,829.8 1088.5,829.8C1089.5,829.8 1090.6,853.0 1091.7,857.2C1093.1,862.8 1094.5,885.7 1095.9,887.2C1097.2,888.4 1098.4,890.0 1099.7,890.9C1100.8,891.7 1101.8,896.6 1102.9,896.6C1104.1,896.6 1105.2,890.9 1106.4,890.9C1107.5,890.9 1108.6,951.5 1109.6,951.5C1110.9,951.5 1112.1,920.8 1113.4,919.6C1114.6,918.3 1115.9,915.8 1117.1,915.8C1118.2,915.8 1119.3,921.6 1120.4,924.5C1121.4,927.2 1122.4,1016.8 1123.3,1016.8C1124.6,1016.8 1125.8,1014.3 1127.1,1013.1C1129.3,1010.8 1131.6,882.2 1133.8,882.2C1134.9,882.2 1136.0,963.2 1137.1,963.2C1139.1,963.2 1141.2,882.2 1143.2,882.2C1144.5,882.2 1145.7,883.4 1147.0,883.4C1148.1,883.4 1149.3,879.2 1150.5,879.2C1151.8,879.2 1153.1,909.1 1154.5,909.1C1155.6,909.1 1156.8,892.6 1157.9,888.4C1160.1,880.7 1162.3,827.3 1164.4,827.3C1165.6,827.3 1166.7,1046.7 1167.9,1046.7C1170.2,1046.7 1172.6,872.2 1174.9,872.2C1176.0,872.2 1177.0,1026.8 1178.1,1026.8C1179.3,1026.8 1180.5,883.4 1181.6,883.4C1182.9,883.4 1184.1,1024.3 1185.4,1024.3C1187.5,1024.3 1189.7,855.5 1191.8,855.5C1193.0,855.5 1194.2,885.9 1195.3,885.9C1196.4,885.9 1197.5,883.4 1198.6,882.2C1199.8,880.7 1201.1,816.8 1202.3,816.8C1203.5,816.8 1204.6,928.3 1205.8,928.3C1206.9,928.3 1208.1,867.7 1209.3,867.7C1210.4,867.7 1211.6,903.4 1212.8,903.4C1213.8,903.4 1214.9,902.2 1216.0,901.6C1217.1,901.0 1218.2,873.4 1219.2,873.4C1220.4,873.4 1221.6,901.6 1222.7,901.6C1223.8,901.6 1224.9,880.2 1226.0,880.2C1227.2,880.2 1228.5,954.0 1229.7,954.0C1231.8,954.0 1233.9,856.7 1235.9,856.7C1237.2,856.7 1238.4,935.8 1239.7,935.8C1240.9,935.8 1242.2,825.3 1243.4,825.3C1244.7,825.3 1245.9,959.5 1247.2,959.5C1249.2,959.5 1251.3,882.2 1253.4,882.2C1254.6,882.2 1255.9,928.3 1257.1,928.3C1259.4,928.3 1261.6,894.6 1263.8,894.6C1264.9,894.6 1266.0,900.1 1267.1,900.1C1268.3,900.1 1269.6,900.1 1270.8,900.1C1271.9,900.1 1273.0,880.2 1274.1,880.2C1275.2,880.2 1276.4,938.3 1277.6,938.3C1278.7,938.3 1279.9,895.9 1281.0,895.9C1282.4,895.9 1283.7,925.8 1285.0,925.8C1286.1,925.8 1287.1,910.8 1288.2,910.8C1289.5,910.8 1290.7,924.2 1292.0,929.5C1294.0,938.4 1296.1,1019.3 1298.2,1019.3C1299.4,1019.3 1300.7,932.7 1301.9,922.1C1302.9,913.5 1303.9,895.9 1304.9,892.1C1306.2,887.5 1307.4,875.9 1308.7,875.9C1309.9,875.9 1311.1,928.2 1312.4,934.5C1313.5,940.0 1314.6,952.0 1315.6,952.0C1316.8,952.0 1318.0,889.6 1319.1,889.6C1320.4,889.6 1321.6,891.3 1322.9,892.1C1324.4,893.1 1325.9,979.4 1327.3,979.4C1328.8,979.4 1330.3,892.8 1331.8,889.6C1333.0,887.2 1334.2,883.9 1335.3,882.2C1336.6,880.2 1338.0,866.7 1339.3,866.7C1340.5,866.7 1341.6,984.4 1342.8,984.4C1344.1,984.4 1345.5,886.9 1346.8,885.9C1347.9,885.1 1349.1,883.4 1350.3,883.4C1351.4,883.4 1352.4,889.2 1353.5,892.1C1354.6,895.0 1355.7,927.0 1356.8,927.0C1357.7,927.0 1358.7,887.2 1359.7,887.2C1361.0,887.2 1362.2,887.2 1363.5,887.2C1364.6,887.2 1365.6,905.8 1366.7,905.8C1367.7,905.8 1368.7,893.4 1369.7,893.4C1371.0,893.4 1372.2,918.3 1373.4,918.3C1374.7,918.3 1375.9,882.2 1377.2,882.2C1378.3,882.2 1379.5,1009.3 1380.7,1009.3C1381.8,1009.3 1383.0,920.8 1384.2,920.8C1385.2,920.8 1386.2,1004.3 1387.2,1004.3C1389.2,1004.3 1391.3,888.4 1393.4,888.4C1394.6,888.4 1395.9,888.4 1397.1,888.4C1398.5,888.4 1399.9,903.4 1401.4,903.4C1404.8,903.4 1408.2,870.9 1411.6,870.9C1412.7,870.9 1413.9,1021.8 1415.1,1021.8C1417.2,1021.8 1419.3,858.4 1421.3,858.4C1422.7,858.4 1424.0,1056.5 1425.4,1056.5C1427.6,1056.5 1429.9,880.6 1432.1,880.6C1433.9,880.6 1435.7,1029.5 1437.5,1029.5C1439.3,1029.5 1441.1,876.3 1442.9,875.9C1444.0,875.7 1445.2,875.2 1446.3,875.2C1447.2,875.2 1448.1,896.8 1449.0,896.8C1450.1,896.8 1451.2,892.7 1452.3,892.7C1453.5,892.7 1454.6,931.2 1455.7,931.2C1457.1,931.2 1458.4,890.7 1459.8,890.7C1461.3,890.7 1462.9,1083.5 1464.5,1083.5C1467.4,1083.5 1470.3,828.1 1473.2,828.1C1475.5,828.1 1477.7,945.3 1480.0,945.3C1481.1,945.3 1482.2,891.0 1483.4,889.4C1484.5,887.8 1485.6,884.7 1486.7,884.7C1487.8,884.7 1489.0,891.4 1490.1,891.4C1491.2,891.4 1492.3,890.5 1493.5,890.1C1494.7,889.6 1496.0,824.0 1497.2,824.0C1498.4,824.0 1499.5,949.4 1500.6,949.4C1501.7,949.4 1502.9,881.3 1504.0,881.3C1505.2,881.3 1506.4,950.0 1507.6,950.0C1508.7,950.0 1509.9,877.9 1511.0,877.9C1512.1,877.9 1513.2,921.7 1514.4,921.7C1515.3,921.7 1516.1,913.0 1517.0,913.0C1518.8,913.0 1520.6,1070.0 1522.4,1070.0C1524.2,1070.0 1526.0,890.1 1527.8,890.1C1529.0,890.1 1530.1,892.7 1531.2,892.7C1532.3,892.7 1533.4,889.4 1534.6,889.4C1535.8,889.4 1537.1,953.4 1538.3,953.4C1539.6,953.4 1540.8,876.6 1542.0,876.6C1543.1,876.6 1544.2,887.4 1545.4,887.4C1546.5,887.4 1547.6,883.3 1548.7,883.3C1550.1,883.3 1551.4,886.7 1552.8,888.0C1554.1,889.3 1555.5,895.2 1556.8,898.8C1557.6,900.9 1558.3,1043.0 1559.1,1043.0C1560.1,1043.0 1561.2,893.4 1562.2,893.4C1563.3,893.4 1564.4,921.7 1565.6,921.7C1566.7,921.7 1567.8,828.1 1568.9,828.1C1571.9,828.1 1574.8,1096.9 1577.7,1096.9C1580.6,1096.9 1583.5,868.5 1586.5,868.5C1588.7,868.5 1591.0,925.8 1593.2,925.8C1594.3,925.8 1595.5,895.3 1596.6,894.8C1598.8,893.6 1601.1,891.4 1603.3,891.4C1604.4,891.4 1605.6,927.8 1606.7,927.8C1607.8,927.8 1608.9,895.4 1610.1,895.4C1611.4,895.4 1612.7,929.8 1614.1,929.8C1616.1,929.8 1618.1,886.7 1620.2,886.7C1621.4,886.7 1622.6,1056.5 1623.8,1056.5C1624.8,1056.5 1625.9,893.6 1626.9,893.4C1628.2,893.2 1629.6,893.0 1630.9,892.7C1632.1,892.6 1633.2,795.0 1634.3,795.0C1635.6,795.0 1636.8,1029.5 1638.1,1029.5C1639.3,1029.5 1640.5,900.2 1641.7,900.2C1643.7,900.2 1645.8,944.0 1647.8,944.0C1649.1,944.0 1650.5,882.6 1651.8,882.6C1653.2,882.6 1654.5,884.0 1655.9,884.7C1657.2,885.3 1658.6,895.0 1659.9,900.2C1661.0,904.5 1662.2,1043.0 1663.3,1043.0C1664.0,1043.0 1664.6,903.5 1665.3,903.5C1666.2,903.5 1667.1,1056.5 1668.0,1056.5C1669.4,1056.5 1670.7,882.6 1672.1,882.6C1673.6,882.6 1675.2,1070.0 1676.8,1070.0C1678.6,1070.0 1680.4,899.5 1682.2,899.5C1684.4,899.5 1686.7,948.0 1688.9,948.0C1690.3,948.0 1691.6,911.6 1692.9,911.6C1694.1,911.6 1695.2,944.0 1696.3,944.0C1698.5,944.0 1700.8,826.8 1703.0,826.8C1704.1,826.8 1705.2,919.6 1706.2,919.6C1708.7,919.6 1711.2,870.9 1713.7,870.9C1715.1,870.9 1716.5,984.4 1717.9,984.4C1719.7,984.4 1721.4,874.2 1723.2,874.2C1725.4,874.2 1727.7,897.1 1729.9,897.1C1731.2,897.1 1732.4,890.9 1733.6,890.9C1734.9,890.9 1736.1,923.3 1737.4,923.3C1738.6,923.3 1739.9,890.9 1741.1,890.9C1742.2,890.9 1743.3,891.4 1744.4,891.6C1745.4,891.9 1746.4,912.1 1747.4,912.1C1748.6,912.1 1749.9,832.3 1751.1,832.3C1753.3,832.3 1755.6,930.8 1757.8,930.8C1759.1,930.8 1760.3,889.6 1761.6,889.6C1763.6,889.6 1765.7,998.1 1767.8,998.1C1769.0,998.1 1770.3,887.2 1771.5,887.2C1772.8,887.2 1774.0,922.1 1775.3,922.1C1776.4,922.1 1777.4,893.7 1778.5,893.4C1779.8,893.0 1781.0,892.1 1782.3,892.1C1783.3,892.1 1784.4,907.1 1785.5,907.1C1786.5,907.1 1787.5,828.6 1788.5,828.6C1789.7,828.6 1791.0,1018.0 1792.2,1018.0C1793.3,1018.0 1794.4,887.2 1795.5,887.2C1799.0,887.2 1802.4,1006.8 1805.9,1006.8C1807.2,1006.8 1808.4,899.6 1809.7,899.6C1810.8,899.6 1811.8,900.1 1812.9,900.1C1813.9,900.1 1814.9,881.7 1815.9,881.7C1817.1,881.7 1818.4,883.4 1819.6,883.4C1820.6,883.4 1821.6,878.4 1822.6,878.4C1824.0,878.4 1825.3,934.5 1826.6,934.5C1827.6,934.5 1828.6,889.1 1829.6,889.1C1831.0,889.1 1832.4,889.5 1833.8,889.6C1834.8,889.8 1835.7,907.1 1836.6,907.1C1837.8,907.1 1838.9,880.9 1840.1,880.9C1841.2,880.9 1842.2,904.6 1843.3,904.6C1844.6,904.6 1845.8,811.1 1847.1,811.1C1848.3,811.1 1849.6,890.1 1850.8,890.1C1851.9,890.1 1853.0,880.9 1854.0,880.9C1855.2,880.9 1856.4,881.4 1857.5,881.7C1859.3,882.1 1861.2,1023.0 1863.0,1023.0C1865.7,1023.0 1868.5,834.8 1871.2,834.8C1872.3,834.8 1873.4,902.1 1874.5,902.1C1875.5,902.1 1876.5,878.4 1877.5,878.4C1878.7,878.4 1879.9,1025.5 1881.2,1025.5C1883.4,1025.5 1885.7,880.9 1887.9,880.9C1889.0,880.9 1890.1,1006.8 1891.2,1006.8C1892.4,1006.8 1893.7,887.2 1894.9,887.2C1896.2,887.2 1897.4,899.6 1898.6,899.6C1899.5,899.6 1900.3,898.0 1901.1,897.1C1902.5,895.7 1904.0,857.2 1905.4,857.2C1906.5,857.2 1907.5,897.1 1908.6,897.1C1909.7,897.1 1910.8,834.3 1911.9,834.3C1913.0,834.3 1914.2,930.8 1915.3,930.8C1916.4,930.8 1917.5,896.6 1918.6,896.6C1919.7,896.6 1920.7,909.6 1921.8,909.6C1923.0,909.6 1924.2,901.7 1925.3,899.6C1926.6,897.3 1927.8,882.7 1929.1,882.7C1930.3,882.7 1931.6,924.0 1932.8,924.0C1936.0,924.0 1939.1,882.2 1942.3,882.2C1943.5,882.2 1944.8,914.1 1946.0,914.1C1947.3,914.1 1948.5,883.9 1949.8,883.4C1950.8,883.0 1951.7,882.6 1952.7,882.2C1954.1,881.6 1955.4,854.7 1956.7,854.7C1957.7,854.7 1958.7,863.0 1959.7,867.2C1961.0,872.4 1962.2,1016.8 1963.5,1016.8C1964.5,1016.8 1965.6,884.7 1966.7,884.7C1967.9,884.7 1969.0,1014.8 1970.2,1014.8C1971.3,1014.8 1972.4,885.9 1973.4,885.9C1974.7,885.9 1975.9,1027.3 1977.2,1027.3C1978.4,1027.3 1979.7,1023.6 1980.9,1021.8C1983.0,1018.7 1985.1,889.6 1987.2,889.6C1988.4,889.6 1989.6,890.9 1990.9,890.9C1992.0,890.9 1993.1,880.9 1994.1,880.9C1996.5,880.9 1998.8,975.7 2001.1,975.7C2002.7,975.7 2004.3,873.1 2005.8,867.2C2006.5,864.7 2007.2,862.2 2007.8,859.7C2009.0,855.4 2010.2,770.0 2011.3,770.0C2012.6,770.0 2013.8,886.0 2015.1,889.6C2017.2,895.9 2019.4,908.3 2021.6,908.3C2022.8,908.3 2024.0,784.9 2025.3,784.9C2026.7,784.9 2028.1,852.4 2029.5,859.7C2030.4,864.0 2031.2,869.7 2032.0,874.7C2033.3,882.2 2034.5,958.2 2035.8,958.2C2036.8,958.2 2037.9,934.1 2039.0,922.1" fill="none" stroke="#f0a012" stroke-width="2" stroke-linejoin="round"/>
<path d="M863.0,1048.0C864.1,1046.7 865.2,1044.2 866.2,1044.2C868.5,1044.2 870.7,1079.1 873.0,1079.1C875.3,1079.1 877.6,1050.5 879.9,1050.5C882.0,1050.5 884.1,1056.7 886.2,1056.7C887.6,1056.7 889.0,1036.7 890.4,1036.7C891.5,1036.7 892.6,1050.5 893.6,1050.5C895.7,1050.5 897.8,1049.2 899.9,1049.2C902.4,1049.2 904.9,1080.4 907.3,1080.4C908.6,1080.4 909.8,1062.9 911.1,1062.9C912.2,1062.9 913.2,1070.4 914.3,1070.4C915.5,1070.4 916.6,1055.4 917.8,1055.4C918.9,1055.4 920.0,1069.1 921.1,1069.1C923.3,1069.1 925.5,934.5 927.8,934.5C929.1,934.5 930.4,1056.7 931.8,1056.7C932.8,1056.7 933.8,1049.2 934.8,1049.2C936.3,1049.2 937.7,1050.0 939.2,1050.5C940.1,1050.7 940.9,1054.2 941.7,1054.2C942.9,1054.2 944.1,991.4 945.2,991.4C946.4,991.4 947.5,1049.2 948.7,1049.2C949.9,1049.2 951.0,929.0 952.2,929.0C953.4,929.0 954.5,1077.9 955.7,1077.9C957.8,1077.9 960.0,988.9 962.2,988.9C964.5,988.9 966.8,1074.1 969.1,1074.1C970.3,1074.1 971.5,988.9 972.6,988.9C973.8,988.9 975.0,1079.1 976.1,1079.1C977.3,1079.1 978.4,1046.7 979.6,1046.7C980.9,1046.7 982.1,1059.2 983.3,1059.2C985.4,1059.2 987.5,1054.2 989.6,1054.2C990.8,1054.2 992.1,1057.9 993.3,1057.9C994.4,1057.9 995.5,1041.2 996.6,1041.2C998.8,1041.2 1001.0,1071.6 1003.3,1071.6C1004.5,1071.6 1005.7,988.9 1007.0,988.9C1009.2,988.9 1011.5,1075.4 1013.7,1075.4C1014.8,1075.4 1015.9,990.6 1016.9,990.6C1018.1,990.6 1019.3,1091.6 1020.4,1091.6C1021.5,1091.6 1022.6,1076.5 1023.7,1074.1C1024.9,1071.4 1026.2,1065.8 1027.4,1061.7C1028.5,1058.1 1029.6,971.4 1030.7,971.4C1031.8,971.4 1033.0,1072.9 1034.1,1072.9C1035.2,1072.9 1036.3,1062.9 1037.4,1062.9C1038.5,1062.9 1039.5,1072.9 1040.6,1072.9C1041.9,1072.9 1043.1,992.4 1044.4,992.4C1045.5,992.4 1046.7,1060.4 1047.8,1060.4C1049.0,1060.4 1050.2,948.2 1051.3,948.2C1052.5,948.2 1053.7,1082.9 1054.8,1082.9C1055.9,1082.9 1057.0,985.1 1058.1,985.1C1059.2,985.1 1060.4,1090.3 1061.5,1090.3C1062.8,1090.3 1064.0,947.0 1065.3,947.0C1066.4,947.0 1067.4,1052.9 1068.5,1052.9C1069.7,1052.9 1070.9,965.2 1072.0,965.2C1074.3,965.2 1076.5,1079.1 1078.7,1079.1C1080.7,1079.1 1082.7,1065.0 1084.7,1057.9C1086.1,1052.9 1087.5,927.5 1089.0,927.5C1090.0,927.5 1091.1,1028.8 1092.2,1028.8C1093.4,1028.8 1094.5,985.1 1095.7,985.1C1098.0,985.1 1100.3,1079.1 1102.7,1079.1C1103.9,1079.1 1105.2,991.9 1106.4,991.9C1107.5,991.9 1108.6,1076.1 1109.6,1076.1C1110.9,1076.1 1112.1,988.1 1113.4,988.1C1114.3,988.1 1115.2,1077.9 1116.1,1077.9C1118.5,1077.9 1120.9,1051.2 1123.3,1051.2C1124.6,1051.2 1125.8,1064.7 1127.1,1064.7C1129.3,1064.7 1131.6,1046.2 1133.8,1046.2C1136.0,1046.2 1138.1,1063.7 1140.3,1063.7C1141.3,1063.7 1142.3,1061.5 1143.2,1060.4C1144.7,1058.9 1146.1,963.9 1147.5,963.9C1149.7,963.9 1152.0,1077.1 1154.2,1077.1C1156.5,1077.1 1158.9,1033.0 1161.2,1033.0C1163.5,1033.0 1165.8,1083.6 1168.2,1083.6C1169.4,1083.6 1170.7,1069.0 1171.9,1061.7C1172.9,1055.8 1173.9,938.3 1174.9,938.3C1176.1,938.3 1177.4,1051.7 1178.6,1051.7C1179.6,1051.7 1180.6,1032.3 1181.6,1032.3C1182.9,1032.3 1184.1,1073.6 1185.4,1073.6C1187.5,1073.6 1189.7,1036.2 1191.8,1036.2C1193.0,1036.2 1194.2,1056.7 1195.3,1056.7C1196.4,1056.7 1197.5,1048.7 1198.6,1048.7C1199.8,1048.7 1201.1,1050.4 1202.3,1051.2C1203.5,1052.0 1204.6,1073.6 1205.8,1073.6C1208.1,1073.6 1210.4,985.6 1212.8,985.6C1213.8,985.6 1214.9,1051.7 1216.0,1051.7C1217.1,1051.7 1218.2,989.4 1219.2,989.4C1220.4,989.4 1221.6,1078.6 1222.7,1078.6C1223.8,1078.6 1224.9,1048.0 1226.0,1048.0C1227.2,1048.0 1228.5,1049.7 1229.7,1049.7C1231.0,1049.7 1232.2,1034.7 1233.4,1034.7C1234.5,1034.7 1235.6,1046.7 1236.7,1046.7C1237.7,1046.7 1238.7,1045.5 1239.7,1045.5C1240.9,1045.5 1242.2,1055.4 1243.4,1055.4C1245.5,1055.4 1247.6,1046.3 1249.6,1041.7C1251.1,1038.6 1252.5,980.6 1253.9,980.6C1255.0,980.6 1256.0,1058.7 1257.1,1058.7C1258.3,1058.7 1259.4,1029.3 1260.6,1029.3C1261.8,1029.3 1262.9,1069.1 1264.1,1069.1C1265.1,1069.1 1266.1,1053.4 1267.1,1052.9C1268.3,1052.4 1269.6,1051.2 1270.8,1051.2C1272.9,1051.2 1275.0,1054.9 1277.1,1056.7C1278.4,1057.9 1279.7,1071.1 1281.0,1071.1C1282.4,1071.1 1283.7,1049.2 1285.0,1049.2C1286.1,1049.2 1287.1,1068.6 1288.2,1070.4C1289.5,1072.5 1290.7,1076.6 1292.0,1076.6C1293.1,1076.6 1294.3,1052.9 1295.4,1052.9C1297.6,1052.9 1299.8,1057.9 1301.9,1057.9C1302.9,1057.9 1303.9,1048.8 1304.9,1044.2C1306.2,1038.5 1307.4,960.7 1308.7,960.7C1309.9,960.7 1311.1,1035.1 1312.4,1044.2C1313.5,1052.2 1314.6,1070.4 1315.6,1070.4C1317.0,1070.4 1318.5,1062.9 1319.9,1059.2C1320.9,1056.5 1321.9,981.9 1322.9,981.9C1324.4,981.9 1325.9,1071.6 1327.3,1071.6C1329.8,1071.6 1332.3,1059.2 1334.8,1059.2C1338.1,1059.2 1341.5,1066.7 1344.8,1066.7C1348.1,1066.7 1351.4,1056.7 1354.8,1056.7C1358.1,1056.7 1361.4,1069.1 1364.7,1069.1C1368.0,1069.1 1371.4,1061.7 1374.7,1061.7C1378.0,1061.7 1381.3,1071.6 1384.7,1071.6C1388.0,1071.6 1391.3,1067.7 1394.6,1066.7C1397.9,1065.6 1401.3,1061.7 1404.6,1059.2C1406.9,1057.4 1409.2,939.5 1411.6,939.5C1413.0,939.5 1414.4,1060.2 1415.8,1064.2C1418.1,1070.6 1420.4,1083.5 1422.7,1083.5C1425.8,1083.5 1429.0,935.2 1432.1,935.2C1433.9,935.2 1435.7,1096.9 1437.5,1096.9C1440.7,1096.9 1443.8,1070.0 1447.0,1070.0C1451.5,1070.0 1455.9,1090.2 1460.4,1090.2C1464.9,1090.2 1469.4,1076.7 1473.9,1076.7C1478.4,1076.7 1482.9,1090.2 1487.4,1090.2C1491.9,1090.2 1496.4,1070.0 1500.9,1070.0C1505.4,1070.0 1509.9,1096.9 1514.4,1096.9C1518.8,1096.9 1523.3,1086.1 1527.8,1080.8C1533.7,1073.7 1539.5,928.5 1545.4,928.5C1548.0,928.5 1550.7,1090.2 1553.4,1090.2C1558.4,1090.2 1563.3,1076.7 1568.3,1076.7C1572.8,1076.7 1577.3,1090.2 1581.7,1090.2C1586.2,1090.2 1590.7,1070.0 1595.2,1070.0C1599.7,1070.0 1604.2,1094.2 1608.7,1094.2C1613.2,1094.2 1617.7,1082.6 1622.2,1076.7C1626.2,1071.5 1630.3,913.0 1634.3,913.0C1637.0,913.0 1639.7,1090.2 1642.4,1090.2C1646.9,1090.2 1651.4,1076.7 1655.9,1076.7C1660.4,1076.7 1664.9,1090.2 1669.4,1090.2C1673.9,1090.2 1678.3,1070.0 1682.8,1070.0C1687.3,1070.0 1691.8,1094.2 1696.3,1094.2C1699.2,1094.2 1702.1,1075.8 1705.0,1066.7C1707.6,1058.2 1710.3,944.5 1713.0,944.5C1714.9,944.5 1716.8,1067.6 1718.7,1069.1C1720.2,1070.4 1721.7,1072.9 1723.2,1072.9C1724.4,1072.9 1725.7,1051.7 1726.9,1051.7C1728.1,1051.7 1729.2,1062.9 1730.4,1062.9C1731.5,1062.9 1732.6,1057.1 1733.6,1054.2C1734.9,1050.8 1736.1,987.4 1737.4,987.4C1738.6,987.4 1739.9,1077.9 1741.1,1077.9C1744.4,1077.9 1747.8,944.5 1751.1,944.5C1752.2,944.5 1753.3,1074.6 1754.3,1074.6C1755.5,1074.6 1756.7,1050.5 1757.8,1050.5C1758.9,1050.5 1760.0,1075.4 1761.1,1075.4C1762.3,1075.4 1763.6,1054.2 1764.8,1054.2C1765.8,1054.2 1766.8,1057.9 1767.8,1057.9C1769.1,1057.9 1770.5,944.5 1771.8,944.5C1772.8,944.5 1773.8,1063.7 1774.8,1063.7C1776.0,1063.7 1777.3,966.9 1778.5,966.9C1779.8,966.9 1781.0,1052.9 1782.3,1054.2C1783.5,1055.4 1784.7,1057.9 1786.0,1057.9C1786.8,1057.9 1787.7,983.9 1788.5,983.9C1789.7,983.9 1791.0,1062.9 1792.2,1062.9C1793.3,1062.9 1794.4,1050.5 1795.5,1050.5C1796.6,1050.5 1797.8,1068.7 1799.0,1068.7C1800.0,1068.7 1801.1,1050.5 1802.2,1050.5C1804.5,1050.5 1806.8,1061.7 1809.2,1061.7C1810.3,1061.7 1811.5,1054.7 1812.7,1054.7C1813.7,1054.7 1814.8,1076.6 1815.9,1076.6C1817.1,1076.6 1818.4,961.4 1819.6,961.4C1820.9,961.4 1822.1,1046.8 1823.4,1050.5C1825.5,1056.5 1827.5,1068.7 1829.6,1068.7C1831.9,1068.7 1834.3,1040.5 1836.6,1040.5C1837.8,1040.5 1838.9,1048.1 1840.1,1048.7C1841.2,1049.3 1842.2,1049.9 1843.3,1050.5C1846.6,1052.0 1850.0,1072.9 1853.3,1072.9C1854.5,1072.9 1855.8,1051.7 1857.0,1051.7C1859.0,1051.7 1861.0,1081.6 1863.0,1081.6C1865.2,1081.6 1867.3,1073.8 1869.5,1071.6C1872.3,1068.9 1875.1,1050.5 1878.0,1050.5C1879.0,1050.5 1880.1,1074.1 1881.2,1074.1C1883.4,1074.1 1885.7,1046.7 1887.9,1046.7C1889.0,1046.7 1890.1,1061.7 1891.2,1061.7C1892.6,1061.7 1894.0,932.0 1895.4,932.0C1896.5,932.0 1897.6,1074.6 1898.6,1074.6C1899.7,1074.6 1900.8,1059.2 1901.9,1059.2C1903.0,1059.2 1904.2,1072.9 1905.4,1072.9C1907.3,1072.9 1909.2,1049.2 1911.1,1049.2C1912.5,1049.2 1913.9,1060.4 1915.3,1060.4C1916.4,1060.4 1917.5,1051.7 1918.6,1051.7C1919.8,1051.7 1921.1,1076.6 1922.3,1076.6C1923.4,1076.6 1924.5,929.0 1925.6,929.0C1926.7,929.0 1927.9,1071.6 1929.1,1071.6C1930.1,1071.6 1931.2,1047.2 1932.3,1047.2C1933.5,1047.2 1934.8,1073.6 1936.0,1073.6C1937.1,1073.6 1938.2,1054.8 1939.3,1054.2C1940.4,1053.5 1941.6,1052.2 1942.8,1052.2C1943.9,1052.2 1944.9,1071.1 1946.0,1071.1C1948.5,1071.1 1951.0,1048.0 1953.5,1048.0C1954.6,1048.0 1955.7,1048.8 1956.7,1049.2C1958.8,1050.0 1960.9,1074.1 1963.0,1074.1C1964.2,1074.1 1965.5,942.0 1966.7,942.0C1967.9,942.0 1969.0,1078.6 1970.2,1078.6C1971.5,1078.6 1972.9,1067.9 1974.2,1067.9C1976.4,1067.9 1978.7,1076.6 1980.9,1076.6C1981.9,1076.6 1982.9,1026.3 1983.9,1026.3C1985.2,1026.3 1986.4,1046.7 1987.6,1046.7C1988.7,1046.7 1989.8,1046.7 1990.9,1046.7C1992.1,1046.7 1993.4,1036.2 1994.6,1036.2C1996.8,1036.2 1999.0,1079.1 2001.1,1079.1C2002.4,1079.1 2003.8,979.4 2005.1,979.4C2007.0,979.4 2008.9,1046.7 2010.8,1049.2C2012.1,1050.9 2013.3,1053.8 2014.6,1054.2C2015.8,1054.6 2017.1,1055.0 2018.3,1055.4C2019.4,1055.8 2020.5,1081.6 2021.6,1081.6C2022.8,1081.6 2024.0,1010.6 2025.3,1010.6C2026.7,1010.6 2028.1,1048.0 2029.5,1050.5C2031.2,1053.4 2032.9,1056.9 2034.5,1059.2C2036.0,1061.2 2037.5,1070.0 2039.0,1075.4" fill="none" stroke="#48ba82" stroke-width="2" stroke-linejoin="round"/>
<circle cx="1302" cy="922.5" r="8" fill="#f0a012"/>
<circle cx="1302" cy="1058" r="8" fill="#48ba82"/>
<rect x="863" y="1125" width="1176" height="2" fill="#737373"/>
<rect x="1088" y="1127" width="2" height="11" fill="#666"/>
<rect x="1397" y="1127" width="2" height="11" fill="#666"/>
<rect x="1705.5" y="1127" width="2" height="11" fill="#666"/>
<rect x="2038" y="1127" width="2" height="11" fill="#666"/>
</svg>
<div class="t" id="t27" style="left:2067.8px;top:758.78px;font-size:24px;color:#a3a3a3;font-family:'Liberation Sans', sans-serif;letter-spacing:0.3px;">434ms</div>
<div class="t" id="t28" style="left:2066.4px;top:991.78px;font-size:24px;color:#a3a3a3;font-family:'Liberation Sans', sans-serif;letter-spacing:-0.3px;">150ms</div>
<div class="t" id="t29" style="left:2067.2px;top:1115.38px;font-size:24px;color:#a3a3a3;font-family:'Liberation Sans', sans-serif;letter-spacing:-0.1px;">0ms</div>
<div class="t" id="t30" style="left:950.6px;top:1140.78px;font-size:24px;color:#a3a3a3;font-family:'Liberation Sans', sans-serif;letter-spacing:-0.527px;">Nov 16 at 2:30 AM GMT+1</div>
<div class="t" id="t31" style="left:1256px;top:1140.78px;font-size:24px;color:#a3a3a3;font-family:'Liberation Sans', sans-serif;letter-spacing:-0.852px;">Nov 17 at 11:30 PM GMT+1</div>
<div class="t" id="t32" style="left:1567px;top:1140.78px;font-size:24px;color:#a3a3a3;font-family:'Liberation Sans', sans-serif;letter-spacing:-0.564px;">Nov 19 at 8:30 PM GMT+1</div>
<div class="t" id="t33" style="left:1873.6px;top:1140.78px;font-size:24px;color:#a3a3a3;font-family:'Liberation Sans', sans-serif;letter-spacing:-0.636px;">Nov 21 at 9:00 PM GMT+1</div>
<div class="r" style="left:1322px;top:956px;width:400px;height:148px;background:#0a0a0a;border:2px solid #181818;box-sizing:border-box;"></div>
<div class="t" id="t34" style="left:1343.2px;top:975.88px;font-size:24px;color:#fafafa;font-family:'Liberation Sans', sans-serif;letter-spacing:0.564px;-webkit-text-stroke:0.3px #fafafa;">Nov 17 at 9:30 AM GMT+1</div>
<div class="r" style="left:1344px;top:1020px;width:20px;height:20px;background:#45b884;"></div>
<div class="t" id="t35" style="left:1380.0px;top:1018.68px;font-size:24px;color:#fafafa;font-family:'Liberation Sans', sans-serif;letter-spacing:-0.5px;">p75</div>
<div class="t" id="t36" style="left:1638.8px;top:1018.68px;font-size:24px;color:#fafafa;font-family:'Liberation Sans', sans-serif;letter-spacing:-0.2px;">83</div>
<div class="t" id="t37" style="left:1669.5px;top:1022.37px;font-size:23px;color:#a3a3a3;font-family:'Liberation Mono', monospace;letter-spacing:3.4px;">ms</div>
<div class="r" style="left:1344px;top:1064px;width:20px;height:20px;background:#f0a01a;"></div>
<div class="t" id="t38" style="left:1380.0px;top:1062.68px;font-size:24px;color:#fafafa;font-family:'Liberation Sans', sans-serif;letter-spacing:1.0px;">p95</div>
<div class="t" id="t39" style="left:1624.0px;top:1062.68px;font-size:24px;color:#fafafa;font-family:'Liberation Sans', sans-serif;letter-spacing:0.8px;">248</div>
<div class="t" id="t40" style="left:1669.5px;top:1066.37px;font-size:23px;color:#a3a3a3;font-family:'Liberation Mono', monospace;letter-spacing:3.4px;">ms</div>
<div class="r" style="left:0px;top:1678px;width:3021px;height:2px;background:#232323;"></div>
<div class="t" id="t41" style="left:862.6px;top:1720.34px;font-size:28px;color:#a3a3a3;font-family:'Liberation Mono', monospace;letter-spacing:-0.05px;">powered by <span style="color:#fafafa">openstatus.dev</span></div>
<svg class="r" style="left:1831px;top:1720px" width="24" height="24" viewBox="0 0 24 24" fill="none" stroke="#737373" stroke-width="2" stroke-linecap="round" stroke-linejoin="round"><circle cx="12" cy="12" r="10"/><polyline points="12 6 12 12 16 14"/></svg>
<div class="t" id="t42" style="left:1867.6px;top:1721.60px;font-size:24px;color:#737373;font-family:'Liberation Mono', monospace;letter-spacing:0.034px;">Europe/Berlin</div>
<div class="r" style="left:2087px;top:1696px;width:72px;height:72px;background:#161616;border:2px solid #3a3a3a;box-sizing:border-box;"></div>
<svg class="r" style="left:2107px;top:1716px" width="32" height="32" viewBox="0 0 24 24" fill="none" stroke="#fafafa" stroke-width="2" stroke-linecap="round" stroke-linejoin="round"><path d="M12 3a6 6 0 0 0 9 9 9 9 0 1 1-9-9Z"/></svg>
<div class="r" style="left:0px;top:0px;width:3021px;height:1px;background:#000;"></div>
<div class="r" style="left:0px;top:0px;width:1px;height:1783px;background:#383838;"></div>
<div class="r" style="left:0px;top:1782px;width:3021px;height:1px;background:#383838;"></div>
<svg class="r" style="left:0;top:1763px" width="20" height="20" viewBox="0 0 20 20"><path d="M0 0 L0 20 L20 20 L20 19.5 L14 19.5 A13.5 13.5 0 0 1 0.5 6 L0.5 0 Z" fill="#000"/><path d="M0.5 0 L0.5 6 A13.5 13.5 0 0 0 14 19.5 L20 19.5" fill="none" stroke="#383838" stroke-width="1"/></svg>
<svg class="r" style="left:3001px;top:1763px" width="20" height="20" viewBox="0 0 20 20"><path d="M20 0 L20 20 L0 20 L0 19.5 L6 19.5 A13.5 13.5 0 0 0 19.5 6 L19.5 0 Z" fill="#000"/><path d="M19.5 0 L19.5 6 A13.5 13.5 0 0 1 6 19.5 L0 19.5" fill="none" stroke="#383838" stroke-width="1"/></svg>

</body></html>
